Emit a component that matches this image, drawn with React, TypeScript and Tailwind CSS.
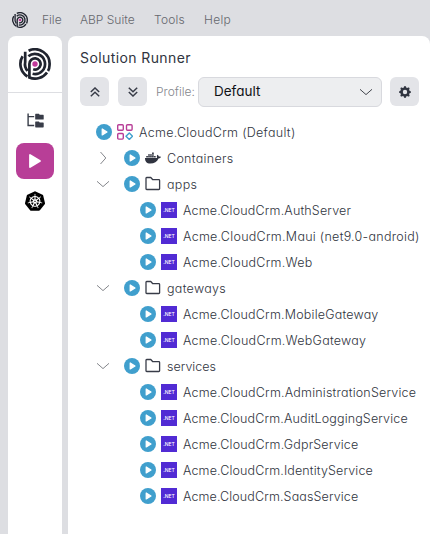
import React from "react";
import { FaDocker } from "react-icons/fa";
import { BsGearFill } from "react-icons/bs";
import { SiKubernetes } from "react-icons/si";

function Logo({ className }: { className: string }) {
  return (
    <svg viewBox="-16 -16 32 32" className={className} fill="none" stroke="#20242f" strokeWidth="2.7">
      <path d="M-6.4-13.2A14.6 14.6 0 0 1 14.5 1.5Q14.4 5 13 7" />
      <path d="M12 8.4A14.6 14.6 0 0 1 -5.6 13.5V0A5.6 5.6 0 1 1 -1.8 5.3" />
      <path d="M-12.4-7.7A14.6 14.6 0 0 0 -7.5 12.5" />
      <path d="M-9.8-12.2V-2A10.1 10.1 0 0 0 -7.4 6.9" />
      <path d="M-6.6-7.7A10.1 10.1 0 1 1 -2.4 9.8" />
      <circle r="2.7" fill="#c23a9b" stroke="none" />
    </svg>
  );
}

function Play() {
  return (
    <svg viewBox="0 0 16 16" className="h-4 w-4 shrink-0">
      <circle cx="8" cy="8" r="8" fill="#409fcd" />
      <path d="M6.2 5v6L11 8z" fill="white" stroke="white" strokeWidth="1.2" strokeLinejoin="round" />
    </svg>
  );
}

function Folder() {
  return (
    <svg viewBox="0 0 16 16" className="h-4 w-4 shrink-0" fill="none" stroke="#383c48" strokeWidth="1.3" strokeLinejoin="round">
      <path d="M1 12.7V2.2q0-.7.7-.7h4.1l2 2.2h6q.8 0 .8.8v8.2q0 .8-.8.8H1.8q-.8 0-.8-.8z" />
    </svg>
  );
}

function Modules() {
  return (
    <svg viewBox="0 0 16 16" className="h-4 w-4 shrink-0" fill="none" stroke="#b83e97" strokeWidth="1.4">
      <rect x=".7" y=".7" width="5.6" height="5.6" rx="1" />
      <rect x="9.5" y=".7" width="5.6" height="5.6" rx="1" />
      <rect x=".7" y="9.5" width="5.6" height="5.6" rx="1" />
      <path d="M12.3 9l3.2 3.3-3.2 3.2L9 12.3z" stroke="#409fcd" strokeLinejoin="round" />
    </svg>
  );
}

function Chevron({ open }: { open: boolean }) {
  return (
    <svg viewBox="0 0 14 14" className="h-3.5 w-3.5 shrink-0" fill="none" stroke="#85878c" strokeWidth="1">
      <path d={open ? "M1 4.3l6 5.3 6-5.3" : "M4.5 1l5.3 6-5.3 6"} />
    </svg>
  );
}

function DoubleChevron({ down = false }: { down?: boolean }) {
  return (
    <div className="flex h-[29px] w-[29px] items-center justify-center rounded-md bg-[#e3e4e8]">
      <svg viewBox="0 0 10 10" className={down ? "h-2.5 w-2.5 rotate-180" : "h-2.5 w-2.5"} fill="none" stroke="#383c48" strokeWidth="1.5">
        <path d="M.8 5L5 1l4.2 4M.8 9.3L5 5.3l4.2 4" />
      </svg>
    </div>
  );
}

function Net() {
  return (
    <span className="flex h-4 w-4 shrink-0 items-center justify-center bg-[#512bd4] text-[5px] font-medium leading-none text-white">
      .NET
    </span>
  );
}

function Group({ label, open, icon, spacing }: { label: string; open: boolean; icon: React.ReactNode; spacing: string }) {
  return (
    <div className="flex h-[26px] items-center pl-7">
      <Chevron open={open} />
      <span className="ml-3.5 flex"><Play /></span>
      <span className="ml-[5px] flex">{icon}</span>
      <span className={"ml-1.5 pt-0.5 " + spacing}>{label}</span>
    </div>
  );
}

function Service({ label, spacing }: { label: string; spacing: string }) {
  return (
    <div className="flex h-[26px] items-center gap-[5px] pl-[72px]">
      <Play />
      <Net />
      <span className={"ml-px pt-0.5 " + spacing}>{label}</span>
    </div>
  );
}

export default function App() {
  return (
    <div className="flex h-[534px] w-[430px] flex-col overflow-hidden bg-[#dddee2] font-['Inter','Liberation_Sans',sans-serif] text-[12.5px] font-light text-[#303440] [font-feature-settings:'cv11']">
      <header className="flex h-9 shrink-0 items-center pl-3 pt-1 text-[12px] text-[#66686e]">
        <Logo className="h-4 w-4" />
        <span className="ml-3.5 w-[38px]">File</span>
        <span className="w-[74px]">ABP Suite</span>
        <span className="w-[50px] tracking-[0.2px]">Tools</span>
        <span className="tracking-[0.3px]">Help</span>
      </header>
      <div className="flex min-h-0 flex-1 gap-1.5 pl-2">
        <nav className="flex w-[54px] shrink-0 flex-col items-center rounded-t-lg bg-white">
          <div className="flex h-[57px] w-full items-center justify-center border-b border-[#dddee2]">
            <Logo className="h-8 w-8" />
          </div>
          <svg viewBox="0 0 17 16" className="mt-5 h-4 w-[17px]" fill="#383c48">
            <path d="M.4.5h1.4v2.4h5.4v1.4H1.8v7.5h5.4v1.4H.4z" />
            <path d="M8.7.8h3.2l.8 1h3.4q.6 0 .6.6V6q0 .6-.6.6H8.8q-.6 0-.6-.6V1.4q0-.6.5-.6zM8.7 8.4h3.2l.8 1h3.4q.6 0 .6.6v3.8q0 .6-.6.6H8.8q-.6 0-.6-.6V9q0-.6.5-.6z" />
          </svg>
          <div className="mt-[14px] flex h-9 w-[38px] items-center justify-center rounded-lg bg-[#b83e97]">
            <svg viewBox="0 0 14 16" className="h-4 w-3.5">
              <path d="M2 2v12l10-6z" fill="white" stroke="white" strokeWidth="1.8" strokeLinejoin="round" />
            </svg>
          </div>
          <SiKubernetes className="mt-3 h-5 w-5 text-black" />
        </nav>
        <main className="min-w-0 flex-1 rounded-t-lg bg-white pt-3">
          <h1 className="ml-3 h-[29px] whitespace-nowrap text-[14px] font-normal leading-5 tracking-[0.4px]">Solution Runner</h1>
          <div className="flex h-[29px] items-center pl-3">
            <DoubleChevron />
            <span className="ml-[9px]"><DoubleChevron down /></span>
            <span className="ml-[9px] w-[42px] whitespace-nowrap text-[12px] text-[#85878c]">Profile:</span>
            <div className="flex h-[30px] w-[184px] items-center justify-between rounded-md border border-[#d8d9de] bg-[#edeef0] pl-[15px] pr-2">
              <span className="text-[13.5px] font-normal text-[#101116]">Default</span>
              <svg viewBox="0 0 14 14" className="h-3.5 w-3.5" fill="none" stroke="#44474f"><path d="M1 4.3l6 5.3 6-5.3" /></svg>
            </div>
            <div className="ml-2 flex h-[29px] w-[29px] items-center justify-center rounded-md bg-[#e3e4e8]">
              <BsGearFill className="h-3 w-3" />
            </div>
          </div>
          <div className="whitespace-nowrap pt-[13px]">
            <div className="flex h-[26px] items-center gap-[5px] pl-7">
              <Play />
              <Modules />
              <span className="ml-px pt-0.5 tracking-[0.3px]">Acme.CloudCrm (Default)</span>
            </div>
            <Group label="Containers" open={false} icon={<FaDocker className="h-4 w-4" />} spacing="tracking-[0.3px]" />
            <Group label="apps" open icon={<Folder />} spacing="tracking-[0.3px]" />
            <Service label="Acme.CloudCrm.AuthServer" spacing="tracking-[0.17px]" />
            <Service label="Acme.CloudCrm.Maui (net9.0-android)" spacing="tracking-[0.28px]" />
            <Service label="Acme.CloudCrm.Web" spacing="tracking-[0.25px]" />
            <Group label="gateways" open icon={<Folder />} spacing="tracking-[0.3px]" />
            <Service label="Acme.CloudCrm.MobileGateway" spacing="tracking-[0.2px]" />
            <Service label="Acme.CloudCrm.WebGateway" spacing="tracking-[0.26px]" />
            <Group label="services" open icon={<Folder />} spacing="" />
            <Service label="Acme.CloudCrm.AdministrationService" spacing="tracking-[0.2px]" />
            <Service label="Acme.CloudCrm.AuditLoggingService" spacing="tracking-[0.14px]" />
            <Service label="Acme.CloudCrm.GdprService" spacing="tracking-[0.17px]" />
            <Service label="Acme.CloudCrm.IdentityService" spacing="tracking-[0.14px]" />
            <Service label="Acme.CloudCrm.SaasService" spacing="tracking-[0.12px]" />
          </div>
        </main>
      </div>
    </div>
  );
}
